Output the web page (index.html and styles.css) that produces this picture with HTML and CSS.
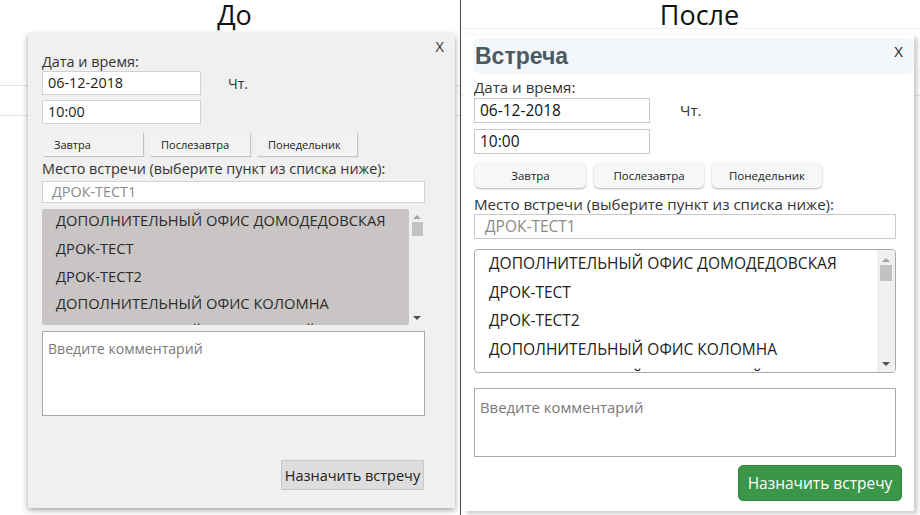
FILE: index.html
```html
<!DOCTYPE html>
<html lang="ru">
<head>
<meta charset="utf-8">
<title>До / После</title>
<link rel="stylesheet" href="styles.css">
</head>
<body>
<div class="page">
  <div class="col col-old">
    <div class="title title-old">До</div>
    <section class="dlg old">
      <div class="close-row"><span class="close">X</span></div>
      <div class="label">Дата и время:</div>
      <div class="date-row">
        <div class="input date">06-12-2018</div>
        <span class="dow">Чт.</span>
      </div>
      <div class="input time">10:00</div>
      <div class="quick">
        <button class="qbtn">Завтра</button>
        <button class="qbtn">Послезавтра</button>
        <button class="qbtn">Понедельник</button>
      </div>
      <div class="label label-place">Место встречи (выберите пункт из списка ниже):</div>
      <div class="input place ph">ДРОК-ТЕСТ1</div>
      <div class="list">
        <div class="items">
          <div class="item">ДОПОЛНИТЕЛЬНЫЙ ОФИС ДОМОДЕДОВСКАЯ</div>
          <div class="item">ДРОК-ТЕСТ</div>
          <div class="item">ДРОК-ТЕСТ2</div>
          <div class="item">ДОПОЛНИТЕЛЬНЫЙ ОФИС КОЛОМНА</div>
          <div class="item item-cut">ДОПОЛНИТЕЛЬНЫЙ ОФИС ЮЖНЫЙ</div>
        </div>
        <div class="sb">
          <span class="arrow up"></span>
          <span class="thumb"></span>
          <span class="sb-fill"></span>
          <span class="arrow down"></span>
        </div>
      </div>
      <div class="textarea ph">Введите комментарий</div>
      <div class="actions"><button class="submit">Назначить встречу</button></div>
    </section>
  </div>
  <div class="col col-new">
    <div class="title title-new">После</div>
    <section class="dlg new">
      <header class="head">
        <h2 class="head-title">Встреча</h2>
        <span class="close">X</span>
      </header>
      <div class="label">Дата и время:</div>
      <div class="date-row">
        <div class="input date">06-12-2018</div>
        <span class="dow">Чт.</span>
      </div>
      <div class="input time">10:00</div>
      <div class="quick">
        <button class="qbtn q1">Завтра</button>
        <button class="qbtn">Послезавтра</button>
        <button class="qbtn">Понедельник</button>
      </div>
      <div class="label label-place">Место встречи (выберите пункт из списка ниже):</div>
      <div class="input place ph">ДРОК-ТЕСТ1</div>
      <div class="list">
        <div class="items">
          <div class="item">ДОПОЛНИТЕЛЬНЫЙ ОФИС ДОМОДЕДОВСКАЯ</div>
          <div class="item">ДРОК-ТЕСТ</div>
          <div class="item">ДРОК-ТЕСТ2</div>
          <div class="item">ДОПОЛНИТЕЛЬНЫЙ ОФИС КОЛОМНА</div>
          <div class="item item-cut">ДОПОЛНИТЕЛЬНЫЙ ОФИС ЮЖНЫЙ</div>
        </div>
        <div class="sb">
          <span class="arrow up"></span>
          <span class="thumb"></span>
          <span class="sb-fill"></span>
          <span class="arrow down"></span>
        </div>
      </div>
      <div class="textarea ph">Введите комментарий</div>
      <div class="actions"><button class="submit">Назначить встречу</button></div>
    </section>
  </div>
</div>
</body>
</html>
```
FILE: styles.css
```css
* { box-sizing: border-box; }
html, body { margin: 0; padding: 0; background: #fff; }
body {
  font-family: "Open Sans", "Noto Sans", "DejaVu Sans", sans-serif;
  color: #222;
  width: 920px;
  height: 515px;
  overflow: hidden;
}
button { font-family: inherit; cursor: pointer; }

.page { display: flex; height: 515px; }

.col { height: 515px; }
.col-old {
  width: 461px;
  border-right: 1px solid #4a4a4a;
  background:
    linear-gradient(#e4e4e4, #e4e4e4) 0 85px / 100% 1px no-repeat,
    linear-gradient(#e4e4e4, #e4e4e4) 0 115px / 100% 1px no-repeat,
    #fff;
}
.col-new {
  width: 459px;
  background:
    linear-gradient(#efefef, #efefef) 0 28px / 100% 1px no-repeat,
    linear-gradient(#e4e4e4, #e4e4e4) 0 95px / 100% 1px no-repeat,
    #fff;
}

.title {
  height: 30px;
  line-height: 30px;
  font-size: 27px;
  color: #111;
  text-align: center;
}
.title-old { padding-left: 9px; }
.title-new { padding-left: 18px; }

/* ---------- shared ---------- */
.dlg { display: flex; flex-direction: column; }
.label { line-height: 18px; }
.date-row { display: flex; align-items: center; }
.input {
  background: #fff;
  white-space: nowrap;
}
.ph { color: #858585; }
.quick { display: flex; }
.list { display: flex; overflow: hidden; }
.items { flex: 1; overflow: hidden; }
.item { white-space: nowrap; }
.item-cut { overflow: hidden; }
.sb { display: flex; flex-direction: column; align-items: center; }
.arrow { width: 0; height: 0; border-left: 4px solid transparent; border-right: 4px solid transparent; }
.arrow.up { border-bottom: 4px solid #a3a3a3; }
.arrow.down { border-top: 4px solid #505050; }
.thumb { background: #c2c2c2; }
.sb-fill { flex: 1; }
.actions { display: flex; justify-content: flex-end; }

/* ---------- old ---------- */
.old {
  margin: 4px 0 0 28px;
  width: 427px;
  background: #f0f0f0;
  padding: 3px 30px 18px 14px;
  box-shadow: 0 2px 6px rgba(0, 0, 0, 0.38);
  font-size: 14.4px;
  color: #333;
}
.old .close-row { height: 16px; display: flex; justify-content: flex-end; margin-right: -19px; }
.old .close { line-height: 16px; font-size: 14.5px; color: #333; margin-top: 2px; }
.old .input {
  height: 24px;
  border: 1px solid #d2d2d2;
  padding-left: 5px;
  line-height: 22px;
  color: #222;
}
.old .date, .old .time { width: 159px; }
.old .dow { margin-left: 27px; font-size: 14px; color: #333; }
.old .time { margin-top: 5px; }
.old .quick { margin-top: 8px; gap: 7px; padding-left: 1px; }
.old .qbtn {
  width: 100px;
  height: 24px;
  border: none;
  background: #f2f2f2;
  box-shadow: 1px 1px 1px rgba(0, 0, 0, 0.18);
  text-align: left;
  padding: 0 0 0 11px;
  font-size: 11px;
  color: #222;
}
.old .label-place { margin-top: 4px; }
.old .place { margin-top: 3px; height: 22px; line-height: 20px; padding-left: 9px; color: #8a8a8a; }
.old .list { margin-top: 6px; height: 116px; }
.old .items { background: #c9c5c4; border-radius: 2px; }
.old .item { height: 27.8px; line-height: 28px; padding-left: 14px; font-size: 14.7px; color: #2b2b2b; }
.old .item:first-child { margin-top: -3px; }
.old .item-cut { height: 8px; }
.old .sb { width: 16px; padding: 6px 0 5px; }
.old .thumb { width: 11px; height: 14px; margin-top: 3px; }
.old .textarea {
  margin-top: 6px;
  height: 85px;
  background: #fff;
  border: 1px solid #a8a8a8;
  padding: 6px 0 0 5px;
  line-height: 22px;
  font-size: 14.1px;
  color: #7a7a7a;
}
.old .actions { margin-top: 44px; padding-right: 1px; }
.old .submit {
  height: 30px;
  width: 143px;
  border: 1px solid #c8c8c8;
  background: #dddddd;
  font-size: 14.5px;
  color: #222;
  padding: 0;
}

/* ---------- new ---------- */
.new {
  margin: 5px 0 0 2px;
  width: 451px;
  background: #fff;
  padding: 3px 18px 10px 11px;
  box-shadow: 4px 3px 3px rgba(0, 0, 0, 0.1), 2px 2px 6px rgba(0, 0, 0, 0.12);
  font-size: 15.1px;
  color: #333;
}
.new .head {
  height: 36px;
  margin: 0 -18px 0 -1px;
  background: #f3f7f9;
  border-radius: 8px;
  display: flex;
  align-items: center;
  justify-content: space-between;
  padding: 0 11px 0 2px;
}
.new .head-title {
  margin: 0;
  font-family: "Liberation Sans", Arial, sans-serif;
  font-weight: bold;
  font-size: 23px;
  color: #4b5960;
}
.new .close { font-size: 15px; color: #222; margin-top: -10px; }
.new .label { margin-top: 4px; }
.new .input {
  height: 25px;
  border: 1px solid #c9c9c9;
  padding-left: 5px;
  line-height: 23px;
  font-size: 15.5px;
  color: #111;
}
.new .date, .new .time { width: 176px; }
.new .date { margin-top: 2px; }
.new .dow { margin-left: 30px; font-size: 15px; color: #333; }
.new .time { margin-top: 6px; }
.new .quick { margin-top: 8px; gap: 8px; padding-left: 1px; }
.new .qbtn {
  width: 110px;
  height: 26px;
  border: none;
  border-radius: 5px;
  background: #f6f8f8;
  box-shadow: 0 1px 2px rgba(0, 0, 0, 0.3);
  font-size: 11.5px;
  color: #222;
  padding: 0;
}
.new .q1 { width: 111px; }
.new .label-place { margin-top: 7px; }
.new .place { margin-top: 1px; padding-left: 10px; color: #8a8a8a; }
.new .list {
  margin-top: 10px;
  height: 124px;
  border: 1px solid #a9a9a9;
  border-radius: 4px;
  background: #fff;
}
.new .item { height: 28.7px; line-height: 27px; padding-left: 14px; font-size: 15.5px; color: #222; }
.new .item-cut { height: 7px; }
.new .sb { width: 18px; background: #f0f0f0; padding: 8px 0 6px; }
.new .thumb { width: 12px; height: 16px; margin-top: 3px; }
.new .textarea {
  margin-top: 15px;
  height: 69px;
  border: 1px solid #a9a9a9;
  padding: 7px 0 0 5px;
  line-height: 22px;
  font-size: 14.9px;
  color: #7a7a7a;
}
.new .actions { margin-top: 8px; margin-right: -6px; }
.new .submit {
  height: 36px;
  width: 164px;
  border: 1px solid #2f8a3e;
  border-radius: 5px;
  background: #3a9648;
  color: #fff;
  font-size: 15.5px;
  padding: 0;
}
```
